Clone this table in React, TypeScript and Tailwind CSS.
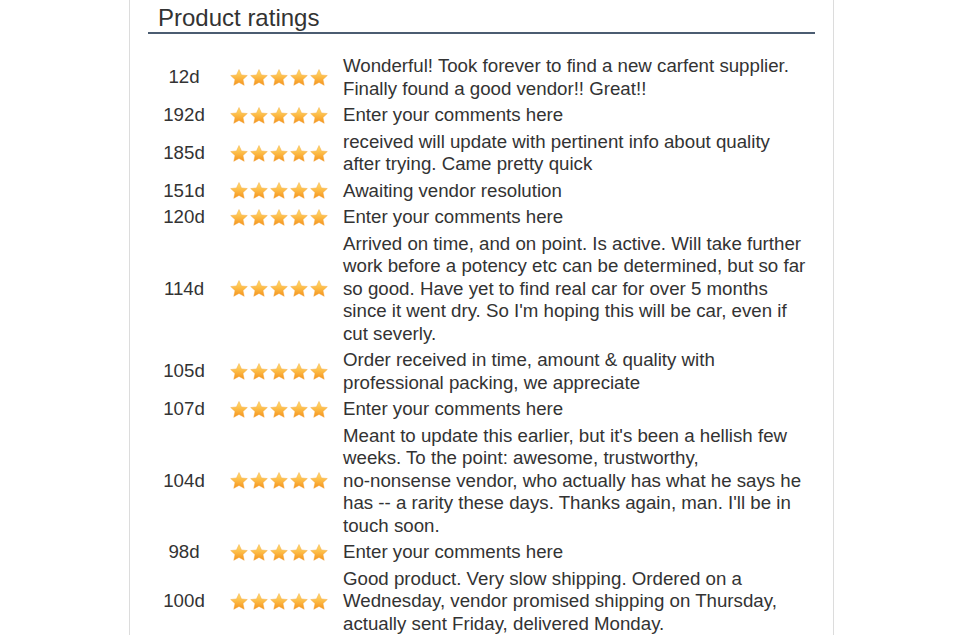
import type { ReactNode } from 'react';

const ratings: { age: string; text: ReactNode }[] = [
  { age: '12d', text: 'Wonderful! Took forever to find a new carfent supplier. Finally found a good vendor!! Great!!' },
  { age: '192d', text: 'Enter your comments here' },
  { age: '185d', text: 'received will update with pertinent info about quality after trying. Came pretty quick' },
  { age: '151d', text: 'Awaiting vendor resolution' },
  { age: '120d', text: 'Enter your comments here' },
  {
    age: '114d',
    text: "Arrived on time, and on point. Is active. Will take further work before a potency etc can be determined, but so far so good. Have yet to find real car for over 5 months since it went dry. So I'm hoping this will be car, even if cut severly.",
  },
  { age: '105d', text: 'Order received in time, amount & quality with professional packing, we appreciate' },
  { age: '107d', text: 'Enter your comments here' },
  {
    age: '104d',
    text: (
      <>
        Meant to update this earlier, but it's been a hellish few weeks. To the point: awesome, trustworthy,{' '}
        <span className="whitespace-nowrap">no-nonsense</span> vendor, who actually has what he says he has -- a
        rarity these days. Thanks again, man. I'll be in touch soon.
      </>
    ),
  },
  { age: '98d', text: 'Enter your comments here' },
  {
    age: '100d',
    text: 'Good product. Very slow shipping. Ordered on a Wednesday, vendor promised shipping on Thursday, actually sent Friday, delivered Monday.',
  },
];

function Star() {
  return (
    <svg viewBox="1.2 1.2 21.6 20.8" className="w-[18px] h-[17px]">
      <path
        d="M12 1.8l3.1 6.6 7.1.8-5.3 4.9 1.5 7.1L12 17.6l-6.4 3.6 1.5-7.1-5.3-4.9 7.1-.8z"
        fill="url(#starGrad)"
        stroke="#f2a43a"
        strokeWidth="0.5"
        strokeLinejoin="round"
      />
    </svg>
  );
}

export default function App() {
  return (
    <div className="min-h-screen bg-white font-['Liberation_Sans',Arial,sans-serif] text-[#333]">
      <svg width="0" height="0" className="absolute">
        <defs>
          <linearGradient id="starGrad" x1="0" y1="0" x2="0" y2="1">
            <stop offset="0%" stopColor="#ffde70" />
            <stop offset="55%" stopColor="#fcb640" />
            <stop offset="100%" stopColor="#f3921c" />
          </linearGradient>
        </defs>
      </svg>
      <div className="ml-[129px] w-[705px] min-h-[635px] border-x border-[#dcdcdc] px-[18px] pt-[4px]">
        <h2 className="pl-[10px] text-[24px] leading-[28px] font-normal border-b-2 border-[#4b5c71]">
          Product ratings
        </h2>
        <div className="mt-[19px] flex flex-col">
          {ratings.map((r, i) => (
            <div key={i} className="flex items-center py-[2px]">
              <div className="w-[72px] text-center text-[18.7px] leading-[22.5px]">{r.age}</div>
              <div className="ml-[10px] flex gap-[2px] w-[98px]">
                {[0, 1, 2, 3, 4].map((s) => (
                  <Star key={s} />
                ))}
              </div>
              <div className="ml-[15px] w-[467px] text-[18.7px] leading-[22.5px]">{r.text}</div>
            </div>
          ))}
        </div>
      </div>
    </div>
  );
}
